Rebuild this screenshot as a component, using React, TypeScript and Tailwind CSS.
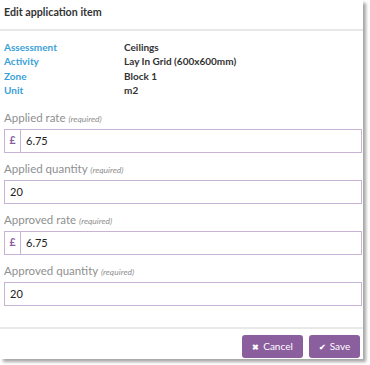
import React from "react";

const Field = ({ label, value, prefix }: { label: string; value: string; prefix?: boolean }) => {
  return (
    <div className="flex flex-col">
      <div className="h-[14px] text-[11.5px] leading-[14px] text-[#8f8f8f]">
        {label} <span className="text-[8.5px] italic">(required)</span>
      </div>
      <div className="mt-[4px] flex h-[24px] w-[358px] border-[1.5px] border-[#c8b2d6] bg-white">
        {prefix && (
          <span className="flex w-[16px] items-center justify-center border-r-[1.5px] border-[#c8b2d6] text-[10.5px] font-bold text-[#8b5e9e]">
            £
          </span>
        )}
        <span className="flex items-center pl-[5px] text-[11px] text-[#222]">{value}</span>
      </div>
    </div>
  );
};

const App = () => {
  return (
    <div className="h-[365px] w-[370px] bg-white font-['Lato',sans-serif]">
      <div className="flex h-[359px] w-[363px] flex-col bg-white shadow-[3px_3px_3px_rgba(0,0,0,0.35)]">
        <div className="h-[31px] border-b-2 border-[#e8e8e8] px-[4px] pt-[5px] text-[10.7px] font-bold leading-[14px] text-[#333]">
          Edit application item
        </div>
        <div className="grid grid-cols-[120px_1fr] px-[4px] pt-[9px] text-[10px] font-bold leading-[14.3px]">
          <span className="text-[#3a9fd8]">Assessment</span>
          <span className="text-[#333]">Ceilings</span>
          <span className="text-[#3a9fd8]">Activity</span>
          <span className="text-[#333]">Lay In Grid (600x600mm)</span>
          <span className="text-[#3a9fd8]">Zone</span>
          <span className="text-[#333]">Block 1</span>
          <span className="text-[#3a9fd8]">Unit</span>
          <span className="text-[#333]">m2</span>
        </div>
        <div className="flex flex-col gap-[9px] px-[4px] pt-[14px]">
          <Field label="Applied rate" value="6.75" prefix />
          <Field label="Applied quantity" value="20" />
          <Field label="Approved rate" value="6.75" prefix />
          <Field label="Approved quantity" value="20" />
        </div>
        <div className="mt-[21px] flex justify-end gap-[6px] border-t-2 border-[#e8e8e8] pr-[3px] pt-[6px]">
          <button className="flex h-[23px] w-[61px] items-center justify-center gap-[4px] rounded-[3px] bg-[#8b5e9e] text-[10px] text-white">
            <span className="text-[8px] font-bold">✖</span> Cancel
          </button>
          <button className="flex h-[23px] w-[51px] items-center justify-center gap-[4px] rounded-[3px] bg-[#8b5e9e] text-[10px] text-white">
            <span className="text-[8px] font-bold">✔</span> Save
          </button>
        </div>
      </div>
    </div>
  );
};

export default App;
